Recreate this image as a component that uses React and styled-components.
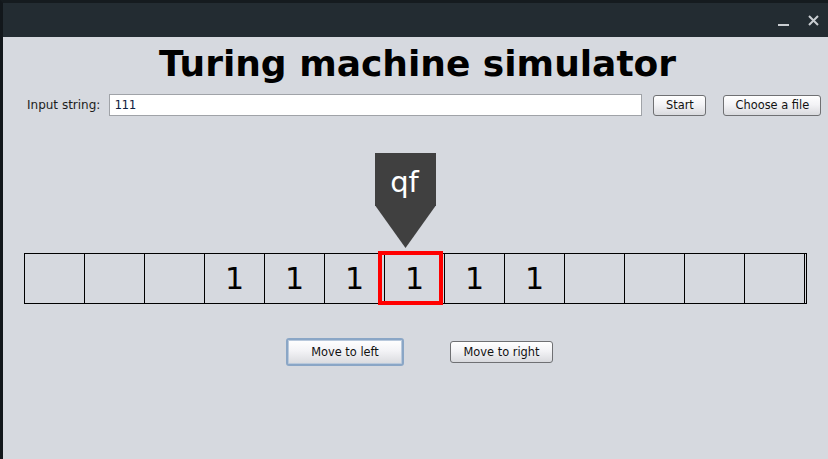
import React from 'react';
import styled, { createGlobalStyle } from 'styled-components';

const Global = createGlobalStyle`
    html, body {
        margin: 0;
        padding: 0;
        background: #151b1f;
    }
    * { box-sizing: border-box; }
`;

const Window = styled.div`
    width: 828px;
    height: 459px;
    border-top: 3px solid #151b1f;
    border-left: 3px solid #12171b;
    display: flex;
    flex-direction: column;
    overflow: hidden;
`;

const TitleBar = styled.div`
    height: 34px;
    background: #232c32;
    display: flex;
    align-items: center;
    justify-content: flex-end;
    padding-right: 9px;
    gap: 19px;
`;

const Minimize = styled.span`
    display: block;
    width: 11px;
    height: 2px;
    background: #c9cdd1;
    margin-top: 9px;
`;

const Close = styled.svg`
    width: 11px;
    height: 11px;
`;

const Content = styled.div`
    flex: 1;
    background: #d6d9df;
    display: flex;
    flex-direction: column;
    font-family: "DejaVu Sans", sans-serif;
    color: #111;
`;

const Title = styled.h1`
    margin: 6px 0 0 0;
    font-family: "DejaVu Sans", sans-serif;
    font-weight: bold;
    font-size: 36px;
    line-height: 42px;
    text-align: center;
    color: #000;
    padding-left: 4px;
`;

const InputRow = styled.div`
    display: flex;
    align-items: center;
    margin-top: 9px;
    padding-left: 24px;
    height: 22px;
`;

const Label = styled.label`
    font-size: 12px;
    color: #1c1c1c;
    margin-right: 9px;
`;

const TextInput = styled.input`
    width: 533px;
    height: 22px;
    border: 1px solid #a0a3a8;
    background: #fff;
    font-family: "DejaVu Sans Mono", monospace;
    font-size: 12px;
    color: #0e2140;
    padding: 0 4px;
    outline: none;
`;

const Button = styled.button`
    height: ${p => p.$h || 21}px;
    width: ${p => p.$w}px;
    margin-left: ${p => p.$ml || 0}px;
    padding: 0;
    font-family: "DejaVu Sans", sans-serif;
    font-size: 11.4px;
    color: #111;
    border: ${p => (p.$focused ? '2px solid #8aa6c6' : '1px solid #6f7073')};
    border-radius: 3px;
    background: linear-gradient(#ffffff, #f3f3f6 45%, #d9dade);
    box-shadow: ${p => (p.$focused ? 'inset 0 0 0 1px #b9c9dc' : 'none')};
    cursor: pointer;
`;

const Stage = styled.div`
    margin-top: 37px;
    display: flex;
    flex-direction: column;
`;

const Head = styled.div`
    margin-left: 372px;
    width: 61px;
    height: 95px;
    background: #404040;
    clip-path: polygon(0 0, 100% 0, 100% 55%, 50% 100%, 0 55%);
    color: #fff;
    font-size: 29px;
    text-align: center;
    line-height: 1;
    padding-top: 15px;
    padding-right: 2px;
`;

const Tape = styled.div`
    margin-top: 5px;
    margin-left: 21px;
    display: flex;
    height: 51px;
    border-top: 1px solid #000;
    border-bottom: 1px solid #000;
    border-left: 1px solid #000;
    align-self: flex-start;
`;

const Cell = styled.div`
    position: relative;
    width: 60px;
    height: 100%;
    border-right: 1px solid #000;
    display: flex;
    align-items: center;
    justify-content: center;
    font-family: "DejaVu Sans", sans-serif;
    font-size: 30px;
    color: #000;
`;

const TapeEnd = styled.div`
    width: 2px;
    border-right: 1px solid #000;
`;

const Highlight = styled.div`
    position: absolute;
    left: -7px;
    top: -3px;
    width: 65px;
    height: 54px;
    border: 4px solid #ff0000;
`;

const MoveRow = styled.div`
    display: flex;
    align-items: center;
    margin-top: 34px;
    padding-left: 283px;
`;

const tape = ['', '', '', '1', '1', '1', '1', '1', '1', '', '', '', ''];
const headIndex = 6;

export default function App() {
    return (
        <>
            <Global />
            <Window>
                <TitleBar>
                    <Minimize />
                    <Close viewBox="0 0 11 11">
                        <path d="M1 1 L10 10 M10 1 L1 10" stroke="#c9cdd1" strokeWidth="2" />
                    </Close>
                </TitleBar>
                <Content>
                    <Title>Turing machine simulator</Title>
                    <InputRow>
                        <Label>Input string:</Label>
                        <TextInput defaultValue="111" />
                        <Button $w={53} $ml={11}>Start</Button>
                        <Button $w={98} $ml={17}>Choose a file</Button>
                    </InputRow>
                    <Stage>
                        <Head>qf</Head>
                        <Tape>
                            {tape.map((s, i) => (
                                <Cell key={i}>
                                    {s}
                                    {i === headIndex && <Highlight />}
                                </Cell>
                            ))}
                            <TapeEnd />
                        </Tape>
                    </Stage>
                    <MoveRow>
                        <Button $w={118} $h={28} $focused>Move to left</Button>
                        <Button $w={103} $h={22} $ml={46}>Move to right</Button>
                    </MoveRow>
                </Content>
            </Window>
        </>
    );
}
